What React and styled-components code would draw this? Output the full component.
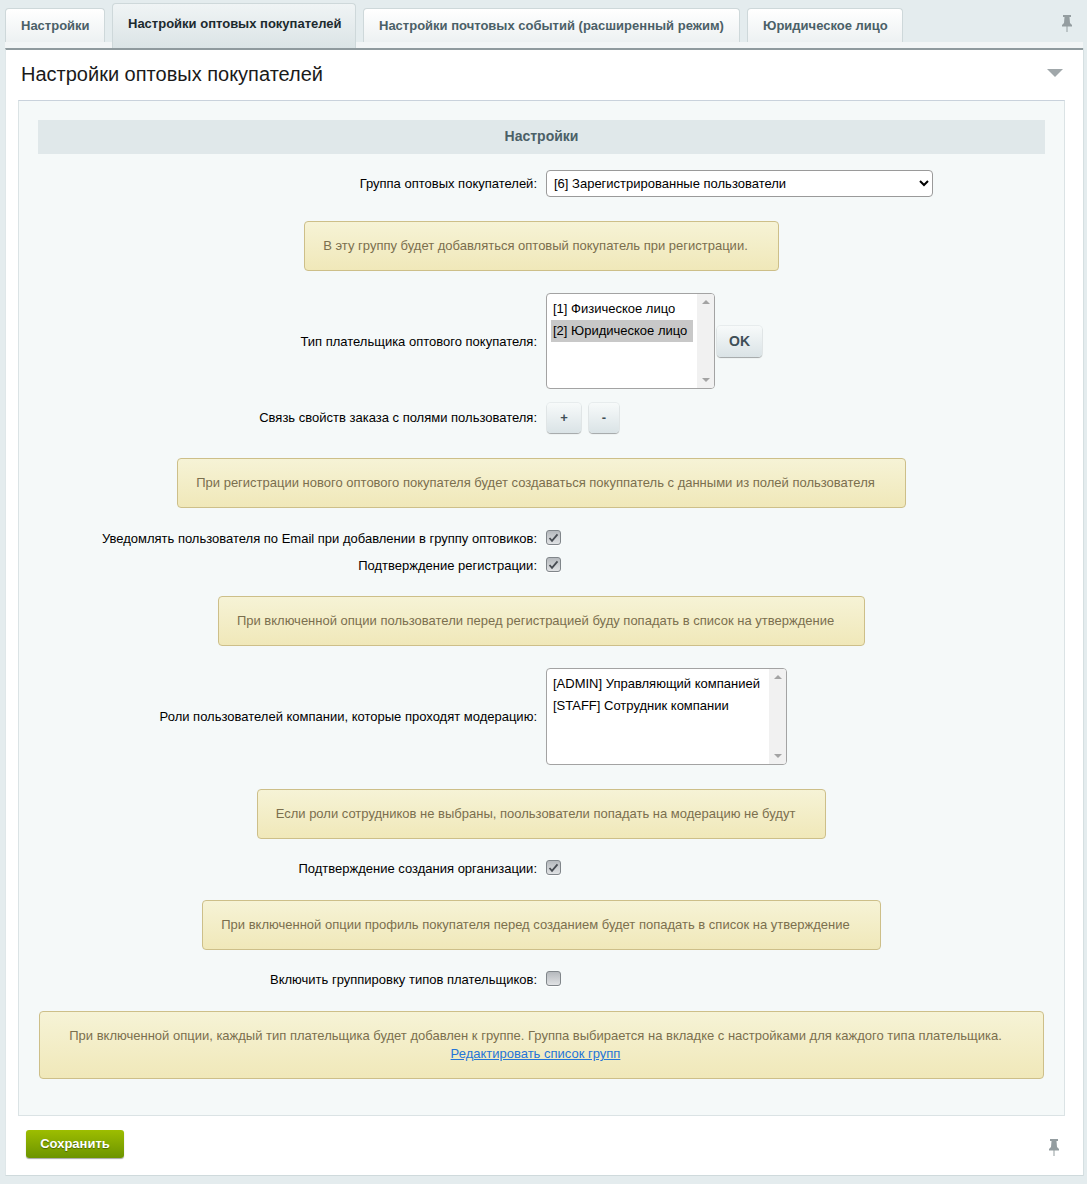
import React from 'react'
import styled, {createGlobalStyle} from 'styled-components'

const GlobalStyle = createGlobalStyle`
    body{
        margin:0;
        background-color:#e4ecee;
        font-family:"Liberation Sans", Arial, sans-serif;
        font-size:13px;
        color:#000;
    }
`

const Page = styled.div`
    width:1087px;
    height:1184px;
    padding:3px 4px 0 5px;
    box-sizing:border-box;
    overflow:hidden;
`

const TabBar = styled.div`
    display:flex;
    align-items:flex-end;
    gap:7px;
    height:39px;
    position:relative;
`

const Tab = styled.div`
    box-sizing:border-box;
    width:${p => p.$width}px;
    height:${p => p.$active ? 45 : 34}px;
    margin-bottom:${p => p.$active ? -6 : 0}px;
    padding:${p => p.$active ? 12 : 9}px 0 0 15px;
    border:1px solid #ced8da;
    border-bottom:none;
    border-radius:4px 4px 0 0;
    background:${p => p.$active
        ? 'linear-gradient(to bottom,#f0f4f5,#dbe4e6)'
        : 'linear-gradient(to bottom,#ffffff,#edf1f2)'};
    font-weight:bold;
    color:${p => p.$active ? '#1c2a2e' : '#4b6067'};
    position:relative;
    z-index:2;
    white-space:nowrap;
`

const TabPin = styled.svg`
    position:absolute;
    right:11px;
    top:12px;
`

const TabStrip = styled.div`
    height:6px;
    background-color:#f2f5f6;
`

const Panel = styled.div`
    height:1128px;
    box-sizing:border-box;
    display:flex;
    flex-direction:column;
    background-color:#fff;
    border-top:2px solid #8f9a9e;
    border-bottom:1px solid #cfdadc;
    border-left:1px solid #dfe7e9;
    box-shadow:1px 0 0 #d5dfe1;
    padding:0 18px 0 12px;
`

const PanelHead = styled.div`
    height:50px;
    display:flex;
    align-items:center;
    justify-content:space-between;
    padding:0 0 1px 3px;
    box-sizing:border-box;
`

const Title = styled.h1`
    margin:0;
    font-size:20px;
    font-weight:normal;
    color:#1a1a1a;
`

const Collapse = styled.svg`
    margin:0 2px 4px 0;
`

const Inner = styled.div`
    display:flex;
    flex-direction:column;
    box-sizing:border-box;
    height:1016px;
    padding:19px 19px 0 19px;
    background-color:#f5f9f9;
    border:1px solid #dbe3e5;
    border-top-color:#c9d2dc;
`

const SectionHead = styled.div`
    height:34px;
    line-height:32px;
    text-align:center;
    font-weight:bold;
    font-size:14px;
    color:#4b6067;
    background-color:#e0e8ea;
`

const Row = styled.div`
    display:grid;
    grid-template-columns:499px 1fr;
    column-gap:9px;
    align-items:center;
    margin-top:${p => p.$top || 0}px;
    min-height:${p => p.$height || 27}px;
`

const Label = styled.div`
    text-align:right;
    color:#000;
`

const Field = styled.div`
    display:flex;
    align-items:center;
`

const Select = styled.select`
    width:387px;
    height:27px;
    box-sizing:border-box;
    padding:0 0 0 3px;
    border:1px solid #9a9a9a;
    border-radius:4px;
    background-color:#fff;
    font-family:inherit;
    font-size:13px;
    color:#000;
`

const ListBox = styled.div`
    display:flex;
    box-sizing:border-box;
    width:${p => p.$width}px;
    height:${p => p.$height}px;
    border:1px solid #a3a3a3;
    border-radius:4px;
    background-color:#fff;
    overflow:hidden;
`

const Options = styled.div`
    flex:1;
    padding:4px;
`

const Option = styled.div`
    height:22px;
    line-height:21px;
    padding-left:2px;
    white-space:nowrap;
    background-color:${p => p.$selected ? '#c8c8c8' : 'transparent'};
`

const Track = styled.div`
    width:17px;
    display:flex;
    flex-direction:column;
    justify-content:space-between;
    align-items:center;
    padding:6px 0;
    box-sizing:border-box;
    background-color:#f1f1f1;
`

const Arrow = styled.span`
    width:0;
    height:0;
    border-left:4px solid transparent;
    border-right:4px solid transparent;
    border-${p => p.$down ? 'top' : 'bottom'}:4px solid #a3a3a3;
`

const Button = styled.button`
    box-sizing:border-box;
    width:${p => p.$width}px;
    height:${p => p.$height || 30}px;
    margin-left:${p => p.$left || 0}px;
    padding:0;
    border:none;
    border-radius:4px;
    background:linear-gradient(to bottom,#f7fafa,#dae3e6);
    box-shadow:0 1px 1px rgba(0,0,0,0.3), 0 0 0 1px rgba(190,200,203,0.25);
    font-family:inherit;
    font-weight:bold;
    font-size:${p => p.$size || 13}px;
    color:#3f4f57;
`

const Box = styled.span`
    box-sizing:border-box;
    width:15px;
    height:15px;
    margin-top:-2px;
    display:flex;
    align-items:center;
    justify-content:center;
    border:1px solid #80868a;
    border-radius:3px;
    background:linear-gradient(to bottom,#b5b9bd,#e0e2e4);
    box-shadow:0 1px 0 #fff;
`

const Note = styled.div`
    align-self:center;
    box-sizing:border-box;
    width:${p => p.$width}px;
    margin-top:${p => p.$top}px;
    padding:15px 12px 15px 0;
    line-height:18px;
    text-align:center;
    color:#7b6f4e;
    border:1px solid #cdbf89;
    border-radius:4px;
    background:linear-gradient(to bottom,#f6f3d6,#f0e8b9);
`

const NoteLink = styled.a`
    color:#2675d7;
    text-decoration:underline;
`

const Footer = styled.div`
    display:flex;
    justify-content:space-between;
    align-items:center;
    padding:14px 0 0 8px;
`

const SaveButton = styled.button`
    box-sizing:border-box;
    width:98px;
    height:28px;
    padding:0 0 1px;
    border:none;
    border-radius:3px;
    background:linear-gradient(to bottom,#9dbd00,#6c9400);
    box-shadow:0 1px 1px rgba(0,0,0,0.35);
    font-family:inherit;
    font-weight:bold;
    font-size:13px;
    color:#fff;
    text-shadow:0 1px 1px rgba(40,60,0,0.6);
`

const FooterPin = styled.svg`
    margin:6px 6px 0 0;
`

function Pin({as: Comp, ...rest}) {
    return (
        <Comp width="10" height="17" viewBox="0 0 10 17" {...rest}>
            <path d="M1 0h8v2H7.500l.5 6 2 2v1.500H0V10l2-2 .5-6H1z" fill="#949da0"/>
            <rect x="4.500" y="11" width="1" height="6" fill="#949da0"/>
        </Comp>
    )
}

function Check({on}) {
    return (
        <Box>
            {on && (
                <svg width="11" height="10" viewBox="0 0 11 10">
                    <path d="M1.500 5L4 7.800l5.500-6.500" fill="none" stroke="#474c52" strokeWidth="1.800"/>
                </svg>
            )}
        </Box>
    )
}

const tabs = [
    {title: 'Настройки', width: 100},
    {title: 'Настройки оптовых покупателей', width: 244, active: true},
    {title: 'Настройки почтовых событий (расширенный режим)', width: 377},
    {title: 'Юридическое лицо', width: 156},
]

export default function App() {
    return (
        <Page>
            <GlobalStyle/>
            <TabBar>
                {tabs.map(t => (
                    <Tab key={t.title} $width={t.width} $active={t.active}>{t.title}</Tab>
                ))}
                <Pin as={TabPin}/>
            </TabBar>
            <TabStrip/>
            <Panel>
                <PanelHead>
                    <Title>Настройки оптовых покупателей</Title>
                    <Collapse width="16" height="8" viewBox="0 0 16 8">
                        <path d="M0 0h16L8 8z" fill="#a0a7aa"/>
                    </Collapse>
                </PanelHead>
                <Inner>
                    <SectionHead>Настройки</SectionHead>

                    <Row $top={16}>
                        <Label>Группа оптовых покупателей:</Label>
                        <Field>
                            <Select defaultValue="6">
                                <option value="6">[6] Зарегистрированные пользователи</option>
                            </Select>
                        </Field>
                    </Row>

                    <Note $top={24} $width={475}>В эту группу будет добавляться оптовый покупатель при регистрации.</Note>

                    <Row $top={22} $height={96}>
                        <Label>Тип плательщика оптового покупателя:</Label>
                        <Field>
                            <ListBox $width={169} $height={96}>
                                <Options>
                                    <Option>[1] Физическое лицо</Option>
                                    <Option $selected>[2] Юридическое лицо</Option>
                                </Options>
                                <Track><Arrow/><Arrow $down/></Track>
                            </ListBox>
                            <Button $width={45} $height={31} $left={2} $size={14}>OK</Button>
                        </Field>
                    </Row>

                    <Row $top={13} $height={31}>
                        <Label>Связь свойств заказа с полями пользователя:</Label>
                        <Field>
                            <Button $width={34} $left={1}>+</Button>
                            <Button $width={30} $left={8}>-</Button>
                        </Field>
                    </Row>

                    <Note $top={25} $width={729}>При регистрации нового оптового покупателя будет создаваться покуппатель с данными из полей пользователя</Note>

                    <Row $top={17}>
                        <Label>Уведомлять пользователя по Email при добавлении в группу оптовиков:</Label>
                        <Field><Check on/></Field>
                    </Row>
                    <Row>
                        <Label>Подтверждение регистрации:</Label>
                        <Field><Check on/></Field>
                    </Row>

                    <Note $top={17} $width={647}>При включенной опции пользователи перед регистрацией буду попадать в список на утверждение</Note>

                    <Row $top={22} $height={97}>
                        <Label>Роли пользователей компании, которые проходят модерацию:</Label>
                        <Field>
                            <ListBox $width={241} $height={97}>
                                <Options>
                                    <Option>[ADMIN] Управляющий компанией</Option>
                                    <Option>[STAFF] Сотрудник компании</Option>
                                </Options>
                                <Track><Arrow/><Arrow $down/></Track>
                            </ListBox>
                        </Field>
                    </Row>

                    <Note $top={24} $width={569}>Если роли сотрудников не выбраны, поользователи попадать на модерацию не будут</Note>

                    <Row $top={16}>
                        <Label>Подтверждение создания организации:</Label>
                        <Field><Check on/></Field>
                    </Row>

                    <Note $top={18} $width={679}>При включенной опции профиль покупателя перед созданием будет попадать в список на утверждение</Note>

                    <Row $top={16}>
                        <Label>Включить группировку типов плательщиков:</Label>
                        <Field><Check/></Field>
                    </Row>

                    <Note $top={18} $width={1005}>
                        При включенной опции, каждый тип плательщика будет добавлен к группе. Группа выбирается на вкладке с настройками для каждого типа плательщика.
                        <br/>
                        <NoteLink href="#">Редактировать список групп</NoteLink>
                    </Note>
                </Inner>
                <Footer>
                    <SaveButton>Сохранить</SaveButton>
                    <Pin as={FooterPin}/>
                </Footer>
            </Panel>
        </Page>
    )
}
